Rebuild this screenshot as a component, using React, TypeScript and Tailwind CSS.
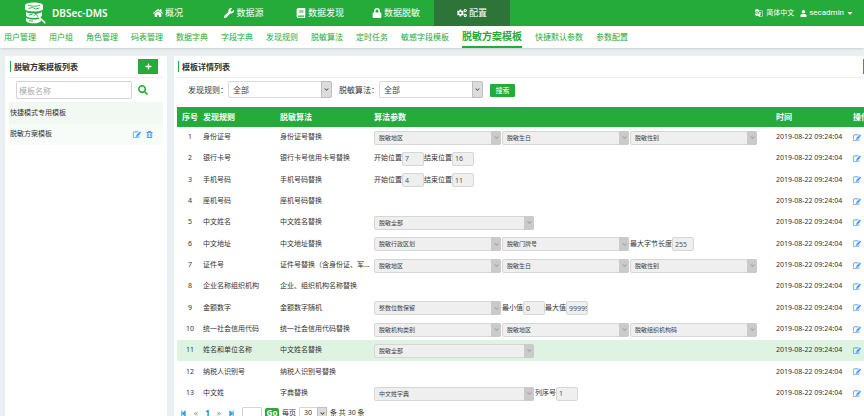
import React from "react";
import { FaHome, FaWrench, FaBook, FaLock, FaCogs, FaUser, FaCaretDown, FaPlus, FaSearch, FaRegTrashAlt, FaChevronDown, FaStepBackward, FaStepForward } from "react-icons/fa";
import { MdGTranslate } from "react-icons/md";

type Param =
  | { kind: "select"; value: string; wide?: boolean }
  | { kind: "input"; label: string; value: string };

type Row = { rule: string; algo: string; params: Param[] };

const s = (value: string, wide = false): Param => ({ kind: "select", value, wide });
const n = (label: string, value: string): Param => ({ kind: "input", label, value });

const rows: Row[] = [
  { rule: "身份证号", algo: "身份证号替换", params: [s("脱敏地区"), s("脱敏生日"), s("脱敏性别")] },
  { rule: "银行卡号", algo: "银行卡号信用卡号替换", params: [n("开始位置", "7"), n("结束位置", "16")] },
  { rule: "手机号码", algo: "手机号码替换", params: [n("开始位置", "4"), n("结束位置", "11")] },
  { rule: "座机号码", algo: "座机号码替换", params: [] },
  { rule: "中文姓名", algo: "中文姓名替换", params: [s("脱敏全部", true)] },
  { rule: "中文地址", algo: "中文地址替换", params: [s("脱敏行政区划"), s("脱敏门牌号"), n("最大字节长度", "255")] },
  { rule: "证件号", algo: "证件号替换（含身份证、军...", params: [s("脱敏地区"), s("脱敏生日"), s("脱敏性别")] },
  { rule: "企业名称组织机构", algo: "企业、组织机构名称替换", params: [] },
  { rule: "金额数字", algo: "金额数字随机", params: [s("整数位数保留"), n("最小值", "0"), n("最大值", "99999")] },
  { rule: "统一社会信用代码", algo: "统一社会信用代码替换", params: [s("脱敏机构类别"), s("脱敏地区"), s("脱敏组织机构码")] },
  { rule: "姓名和单位名称", algo: "中文姓名替换", params: [s("脱敏全部", true)] },
  { rule: "纳税人识别号", algo: "纳税人识别号替换", params: [] },
  { rule: "中文姓", algo: "字典替换", params: [s("中文姓字典", true), n("列序号", "1")] },
];

const mainNav = [
  { label: "概况", Icon: FaHome },
  { label: "数据源", Icon: FaWrench },
  { label: "数据发现", Icon: FaBook },
  { label: "数据脱敏", Icon: FaLock },
  { label: "配置", Icon: FaCogs, active: true },
];

const subNav = ["用户管理", "用户组", "角色管理", "码表管理", "数据字典", "字段字典", "发现规则", "脱敏算法", "定时任务", "敏感字段模板", "脱敏方案模板", "快捷默认参数", "参数配置"];

function EditIcon() {
  return (
    <svg viewBox="0 0 1792 1792" className="size-2" fill="currentColor" aria-hidden="true">
      <path d="M888 1184l116-116-152-152-116 116v56h96v96h56zm440-720q-16-16-33 1l-350 350q-17 17-1 33t33-1l350-350q17-17 1-33zm80 594v190q0 119-84.5 203.5t-203.5 84.5h-832q-119 0-203.5-84.5t-84.5-203.5v-832q0-119 84.5-203.5t203.5-84.5h832q63 0 117 25 15 7 18 23 3 17-9 29l-49 49q-14 14-32 8-23-6-45-6h-832q-66 0-113 47t-47 113v832q0 66 47 113t113 47h832q66 0 113-47t47-113v-126q0-13 9-22l64-64q15-15 35-7t20 29zm-96-738l288 288-672 672h-288v-288zm444 132l-92 92-288-288 92-92q28-28 68-28t68 28l152 152q28 28 28 68t-28 68z" />
    </svg>
  );
}

function Logo() {
  return (
    <svg viewBox="0 0 22 22" className="size-[22px]" fill="none" aria-hidden="true">
      <path d="M1 3.5C1 1.500 5 .5 10 .5s9 1 9 3v3.200c0 1.800-4 2.800-9 2.800s-9-1-9-2.800z" fill="#fff" />
      <path d="M2 10c2 1.200 5 1.600 8 1.600s6-.4 8-1.600v4c-1 1.300-4 2-8 2s-7-.7-8-2z" fill="#fff" />
      <path d="M2 16c2 1.100 5 1.500 8 1.500 2.500 0 5-.3 7-1.200v2.700c-1 1.500-4 2.300-7 2.300-4 0-7-.8-8-2.300z" fill="#fff" />
      <path d="M4 3.200c2 1.200 10 1.200 12 0M4.500 6.500l4-1 3 1.500 4-1M4.500 13l4-.6M5 18.800l4 .3" stroke="#25ab39" strokeWidth=".9" />
      <path d="M9 9.500l3 2.500-2.500 2M12 12l4-2.500M12.500 12.500l2.500 3.500" stroke="#25ab39" strokeWidth=".9" />
      <path d="M15 15l5.800 5.800" stroke="#fff" strokeWidth="1.600" strokeLinecap="round" />
    </svg>
  );
}

function FilterSelect({ id, label }: { id: string; label: string }) {
  return (
    <div className="flex items-center">
      <label htmlFor={id}>{label}：</label>
      <span className="relative flex w-[104px]">
        <select id={id} className="h-[17px] w-full appearance-none rounded-[2px] border border-[#d5dade] bg-white pl-1 text-[8px] leading-[14px] text-[#444]">
          <option>全部</option>
        </select>
        <span className="pointer-events-none absolute inset-y-0 right-0 flex w-[11px] items-center justify-center rounded-r-[2px] border border-[#bfbfbf] bg-[#dcdcdc] text-[#555]">
          <FaChevronDown className="size-[5px]" />
        </span>
      </span>
    </div>
  );
}

function ParamSelect({ value, wide, label }: { value: string; wide?: boolean; label: string }) {
  return (
    <span className={`relative mr-px flex ${wide ? "w-[160px]" : "w-[127px]"}`}>
      <select disabled aria-label={label} className="h-[14px] w-full appearance-none rounded-[2px] border border-[#d6d6d6] bg-[#efefef] pl-1 text-[6px] leading-[10px] text-[#444] opacity-100">
        <option>{value}</option>
      </select>
      <span className="pointer-events-none absolute inset-y-0 right-0 flex w-[10px] items-center justify-center rounded-r-[2px] bg-[#cacaca] text-[#999]">
        <FaChevronDown className="size-[5px]" />
      </span>
    </span>
  );
}

function ParamInput({ id, label, value }: { id: string; label: string; value: string }) {
  return (
    <span className="flex items-center">
      <label htmlFor={id}>{label}</label>
      <input id={id} disabled defaultValue={value} className="h-[14px] w-[22px] rounded-[2px] border border-[#d6d6d6] bg-[#efefef] pl-[2px] text-[7px] text-[#555]" />
    </span>
  );
}

function PanelTitle({ children }: { children: React.ReactNode }) {
  return <h2 className="border-l border-[#25ab39] pl-[3px] text-[8px] leading-[11px] font-bold text-[#333]">{children}</h2>;
}

export default function App() {
  return (
    <div className="h-screen overflow-hidden bg-[#eaeff1] font-['Noto_Sans','Noto_Sans_CJK_SC',sans-serif] text-[7px] text-[#333]">
      <header className="flex h-[26px] items-stretch bg-[#25ab39] text-white">
        <div className="flex w-[130px] items-center gap-[6px] pl-6">
          <Logo />
          <span className="text-[10px] font-semibold whitespace-nowrap">DBSec-DMS</span>
        </div>
        <nav className="flex text-[9px]">
          {mainNav.map(({ label, Icon, active }) => (
            <a key={label} href="#" className={`flex w-[76px] items-center justify-center gap-[2px] ${active ? "bg-[#2c7438]" : ""}`}>
              <Icon className="size-[10px]" />
              {label}
            </a>
          ))}
        </nav>
        <div className="ml-auto flex items-center gap-[6px] pr-[10px] text-[7px]">
          <button className="flex items-center gap-[3px]">
            <MdGTranslate className="size-2" />
            简体中文
          </button>
          <button className="flex items-center gap-[2px]">
            <FaUser className="size-[7px]" />
            <span className="font-[Roboto,sans-serif] text-[8px]">secadmin</span>
            <FaCaretDown className="size-2" />
          </button>
        </div>
      </header>

      <nav className="flex h-[22px] items-stretch gap-[13px] bg-white px-1 text-[8px] whitespace-nowrap text-[#25ab39] shadow-sm">
        {subNav.map((item) => (
          <a key={item} href="#" className={`flex items-center ${item === "脱敏方案模板" ? "border-b-2 border-[#25ab39] text-[10px] font-bold" : ""}`}>
            {item}
          </a>
        ))}
      </nav>

      <main className="flex gap-[7px] pt-2 pl-[5px]">
        <aside className="h-screen w-[162px] shrink-0 bg-white px-[4px]">
          <div className="flex h-[22px] items-center justify-between border-b border-[#eee] pr-[5px] pl-px">
            <PanelTitle>脱敏方案模板列表</PanelTitle>
            <button aria-label="新增" className="flex h-[15px] w-5 items-center justify-center bg-[#25ab39] text-white">
              <FaPlus className="size-[7px]" />
            </button>
          </div>
          <div className="flex items-center gap-[6px] py-[3px] pl-[7px]">
            <input aria-label="模板名称" placeholder="模板名称" className="h-[18px] w-[116px] rounded-[2px] border border-[#d0d5d9] px-[2px] text-[8px] placeholder:text-[#aaa]" />
            <button aria-label="搜索模板" className="text-[#25ab39]">
              <FaSearch className="size-[10px]" />
            </button>
          </div>
          <ul>
            <li className="flex h-[22px] items-center bg-[#f2f9f3] px-px">快捷模式专用模板</li>
            <li className="flex h-[21px] items-center justify-between bg-[#f7fcf8] pr-[10px] pl-px">
              脱敏方案模板
              <span className="flex items-center gap-[5px] text-[#1e88f5]">
                <button aria-label="编辑模板"><EditIcon /></button>
                <button aria-label="删除模板"><FaRegTrashAlt className="size-[7px]" /></button>
              </span>
            </li>
          </ul>
        </aside>

        <section className="-mr-5 h-screen min-w-0 flex-1 bg-white pl-[3px]">
          <div className="flex h-[22px] items-center justify-between border-b border-[#eee] pl-px">
            <PanelTitle>模板详情列表</PanelTitle>
            <button aria-label="保存" className="h-[15px] w-[21px] border border-[#25ab39] bg-white" />
          </div>
          <div className="flex h-[29px] items-start gap-[7px] pt-[3px] pl-[11px] text-[8px]">
            <FilterSelect id="rule" label="发现规则" />
            <FilterSelect id="algo" label="脱敏算法" />
            <button className="mt-[3px] h-[13px] w-[25px] rounded-[1px] bg-[#25ab39] text-[7px] leading-[13px] text-white">搜索</button>
          </div>
          <table className="w-full table-fixed text-left">
            <thead>
              <tr className="h-5 bg-[#25ab39] text-[8px] whitespace-nowrap text-white">
                <th className="w-[26px] text-center">序号</th>
                <th className="w-[77px]">发现规则</th>
                <th className="w-[94px]">脱敏算法</th>
                <th>算法参数</th>
                <th className="w-[77px]">时间</th>
                <th className="w-[31px]">操作</th>
              </tr>
            </thead>
            <tbody>
              {rows.map((row, i) => (
                <tr key={row.rule} className={`h-[21px] nth-[3n]:h-[22px] ${i === 10 ? "bg-[#dff3e2]" : ""}`}>
                  <td className="text-center">{i + 1}</td>
                  <td>{row.rule}</td>
                  <td className="whitespace-nowrap">{row.algo}</td>
                  <td>
                    <div className="flex items-center whitespace-nowrap">
                      {row.params.map((p, j) =>
                        p.kind === "select" ? (
                          <ParamSelect key={j} value={p.value} wide={p.wide} label={p.value} />
                        ) : (
                          <ParamInput key={j} id={`param-${i}-${j}`} label={p.label} value={p.value} />
                        ),
                      )}
                    </div>
                  </td>
                  <td className="whitespace-nowrap">2019-08-22 09:24:04</td>
                  <td>
                    <button aria-label={`编辑${row.rule}`} className="flex text-[#1e88f5]"><EditIcon /></button>
                  </td>
                </tr>
              ))}
            </tbody>
          </table>
          <div className="flex items-center gap-[3px] pt-[3px] pl-[3px] leading-[10px] whitespace-nowrap">
            <div className="flex w-[55px] items-center justify-between text-[#3d9be0]">
              <button aria-label="首页"><FaStepBackward className="size-[7px]" /></button>
              <button aria-label="上一页" className="text-[9px] text-[#999]">«</button>
              <span className="text-[8px] font-bold text-[#1a78c2]">1</span>
              <button aria-label="下一页" className="text-[9px] text-[#999]">»</button>
              <button aria-label="末页"><FaStepForward className="size-[7px]" /></button>
            </div>
            <input aria-label="页码" className="ml-1 h-3 w-5 rounded-[1px] border border-[#d0d5d9]" />
            <button className="h-[11px] w-[14px] rounded-[2px] bg-[#25ab39] text-[8px] font-bold text-white">Go</button>
            <label htmlFor="size">每页</label>
            <span className="relative flex w-7">
              <select id="size" className="h-3 w-full appearance-none rounded-[1px] border border-[#d0d5d9] pl-1 text-[7px] leading-[10px]">
                <option>30</option>
              </select>
              <span className="pointer-events-none absolute inset-y-0 right-0 flex w-[10px] items-center justify-center border border-[#bfbfbf] bg-[#dcdcdc]">
                <FaChevronDown className="size-[5px]" />
              </span>
            </span>
            <span>条 共 30 条</span>
          </div>
        </section>
      </main>
    </div>
  );
}
